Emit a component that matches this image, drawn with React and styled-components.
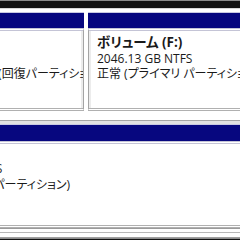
import React from "react";
import styled, { createGlobalStyle } from "styled-components";

const GlobalStyle = createGlobalStyle`
  html, body {
    margin: 0;
    padding: 0;
    background: #ffffff;
    overflow: hidden;
  }
`;

const Screen = styled.div`
  width: 240px;
  height: 240px;
  display: flex;
  flex-direction: column;
  overflow: hidden;
  background: #ffffff;
`;

const BlackBar = styled.div`
  height: 7px;
  flex: none;
  background: #131313;
  border-top: 1px solid #8c8c8c;
  border-bottom: ${props => (props.bottom ? "none" : "1px solid #d8d8d8")};
  margin-top: ${props => (props.bottom ? "auto" : "0")};
`;

const DiskRow = styled.div`
  display: flex;
  flex: none;
  gap: 4px;
  height: ${props => props.height}px;
  margin-top: ${props => props.top}px;
  margin-left: ${props => props.shift}px;
  margin-right: -30px;
`;

const Partition = styled.div`
  display: flex;
  flex-direction: column;
  flex: ${props => (props.grow ? "1 0 auto" : "none")};
  width: ${props => (props.width ? props.width + "px" : "auto")};
  min-width: 0;
`;

const Header = styled.div`
  height: ${props => props.size}px;
  flex: none;
  background: #07077f;
  border-top: 1px solid #c9c9e2;
`;

const Body = styled.div`
  flex: 1;
  display: flex;
  flex-direction: column;
  border-top: 3px double #c4c4d6;
  border-left: 1px solid #a4a4a4;
  border-right: 1px solid #a4a4a4;
  border-bottom: 3px double #b0b0b0;
  box-shadow: inset 2px 0 0 #ececec, inset -2px 0 0 #ececec;
  padding: ${props => props.pad}px 8px 0 ${props => props.left}px;
  overflow: hidden;
  white-space: nowrap;
`;

const Line = styled.div`
  font-size: ${props => (props.bold ? 13.5 : 12)}px;
  line-height: 15.5px;
  height: 15.5px;
  color: #1a1a1a;
  font-weight: ${props => (props.bold ? 700 : 400)};
  font-family: "Open Sans", "Noto Sans CJK JP", sans-serif;
  font-feature-settings: "palt";
`;

const Separator = styled.div`
  flex: none;
  height: 9px;
  border-bottom: 1px solid #a6a6a6;
  box-shadow: 0 3px 0 #e2e2e2;
`;

const BottomLines = styled.div`
  flex: none;
  height: 8px;
  margin-top: auto;
  border-top: 1px solid #9a9a9a;
  border-bottom: 1px solid #a0a0a0;
  box-shadow: inset 0 3px 0 #fff, inset 0 4px 0 #b8b8b8;
`;

function Volume({ name, size, status, pad, left, headerSize }) {
  return (
    <>
      <Header size={headerSize} />
      <Body pad={pad} left={left}>
        <Line bold>{name}</Line>
        <Line>{size}</Line>
        <Line>{status}</Line>
      </Body>
    </>
  );
}

export default function App() {
  return (
    <Screen>
      <GlobalStyle />
      <BlackBar />
      <DiskRow height={99} top={3} shift={-40}>
        <Partition width={124}>
          <Volume
            name=""
            size=""
            status="正常 (回復パーティション)"
            pad={4}
            left={10}
            headerSize={15}
          />
        </Partition>
        <Partition grow>
          <Volume
            name="ボリューム (F:)"
            size="2046.13 GB NTFS"
            status="正常 (プライマリ パーティション)"
            pad={4}
            left={8}
            headerSize={15}
          />
        </Partition>
      </DiskRow>
      <Separator />
      <DiskRow height={104} top={3} shift={-102}>
        <Partition grow>
          <Volume
            name=""
            size="1863.01 GB NTFS"
            status="正常 (プライマリ パーティション)"
            pad={1.5}
            left={8}
            headerSize={16}
          />
        </Partition>
      </DiskRow>
      <BottomLines />
      <BlackBar bottom />
    </Screen>
  );
}
